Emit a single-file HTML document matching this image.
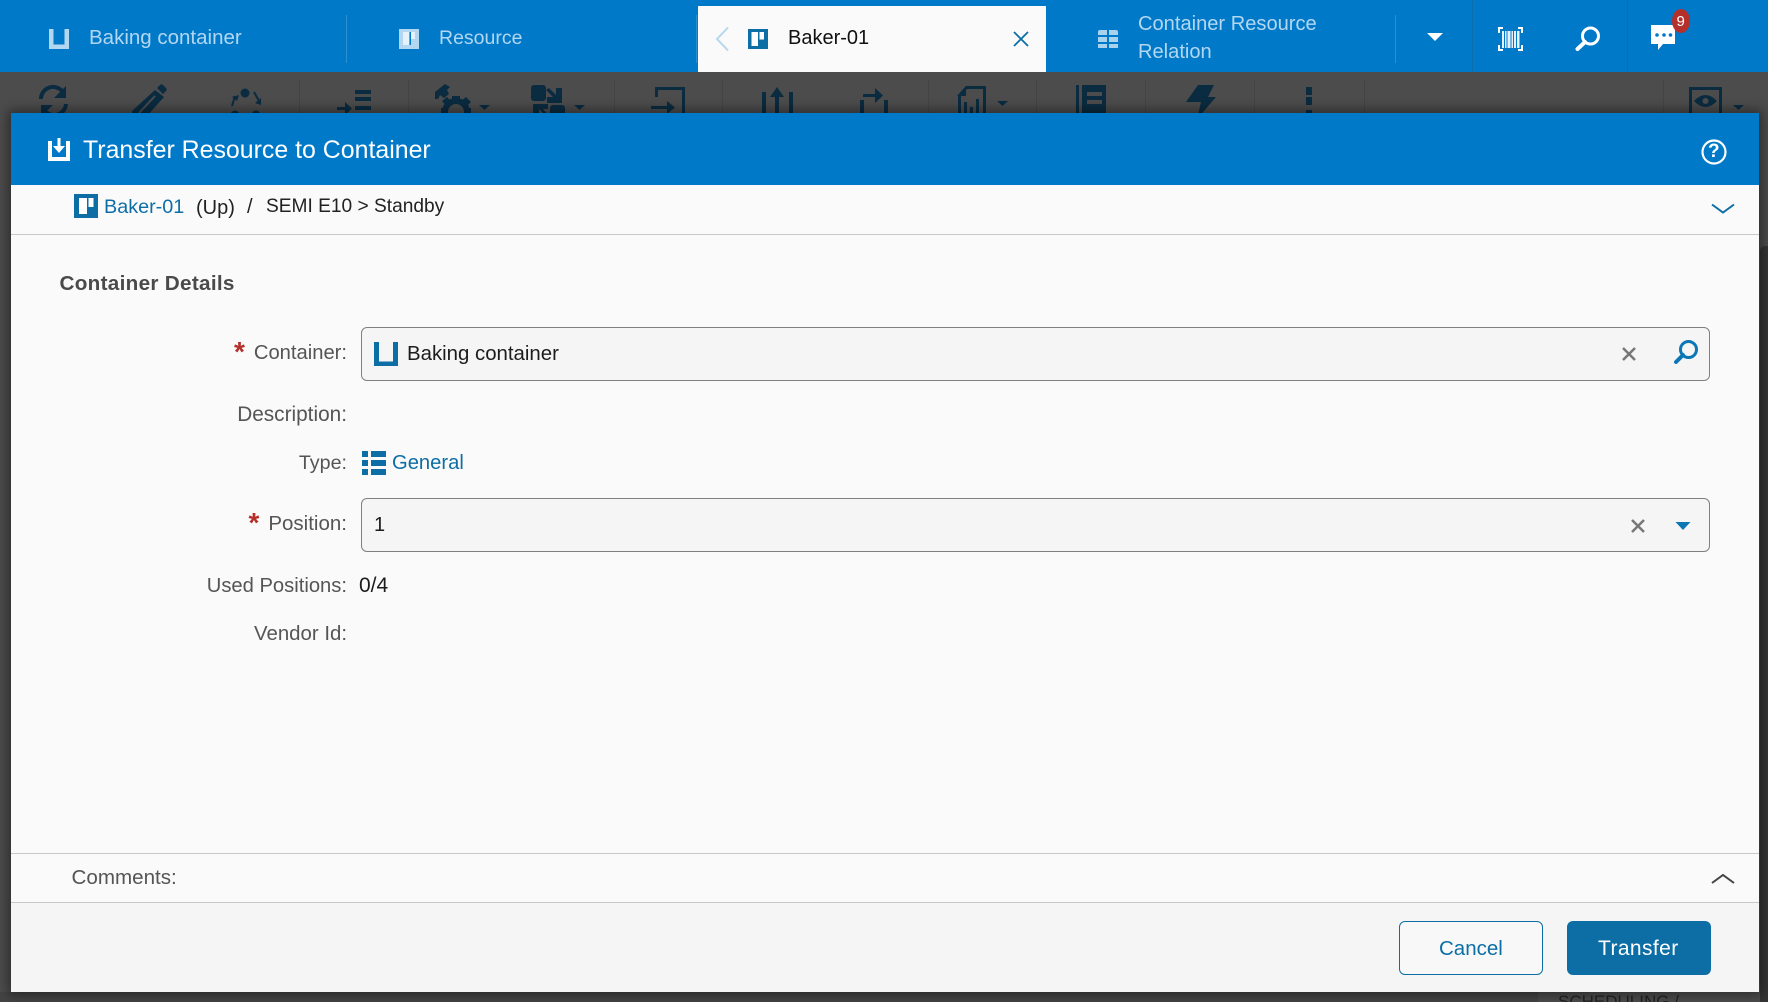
<!DOCTYPE html>
<html>
<head>
<meta charset="utf-8">
<style>
html,body{margin:0;padding:0;width:1768px;height:1002px;overflow:hidden;background:#4c4c4c;font-family:"Liberation Sans",sans-serif;}
#page{position:relative;width:1768px;height:1002px;overflow:hidden;}
.t{position:absolute;white-space:nowrap;line-height:28px;height:28px;font-size:20px;}
.l{color:#555;text-align:right;right:1421px;font-size:20.200px;}
.tab{color:#b3d7f0;}
svg{position:absolute;left:0;top:0;}
#dialog{position:absolute;left:11px;top:113px;width:1748px;height:879px;background:#fafafa;box-shadow:0 0 11px 3px rgba(0,0,0,.42);}
.box{position:absolute;box-sizing:border-box;}
</style>
</head>
<body>
<div id="page">
<div class="box" style="left:1760px;top:246px;width:8px;height:756px;background:#353535;border-top-left-radius:5px"></div>
<div class="box" style="left:0;top:992px;width:1538px;height:10px;background:#444"></div>
<div class="t" style="left:1558px;top:988px;font-size:17px;color:#222">SCHEDULING /</div>

<!-- toolbar -->
<svg width="1768" height="1002" viewBox="0 0 1768 1002">
<g stroke="#444" stroke-width="1"><path d="M299.500 79V113M408.500 79V113M614.500 79V113M722.500 79V113M928.500 79V113M1036.500 79V113M1145.500 79V113M1254.500 79V113M1364.500 79V113M1663.500 79V113"/></g>
<g fill="#0a2b40" stroke="none">
 <!-- refresh -->
 <path d="M41 99a12 12 0 0 1 21-8" fill="none" stroke="#0a2b40" stroke-width="4"/><path d="M66 86v12h-12z"/>
 <path d="M66 104a12 12 0 0 1-21 7" fill="none" stroke="#0a2b40" stroke-width="4"/><path d="M41 116v-11h12z"/>
 <!-- pencil -->
 <path d="M157 88l3-3a2 2 0 0 1 3 0l3 3a2 2 0 0 1 0 3l-3 3z"/>
 <path d="M155 90l9 7-18 20h-14v-6z"/>
 <path d="M139 113l16-17" stroke="#4c4c4c" stroke-width="2"/>
 <!-- circle arrows -->
 <circle cx="245" cy="93" r="4.500"/><circle cx="235" cy="115" r="4.500"/><circle cx="256" cy="115" r="4.500"/>
 <path d="M232 106l3-10M254 92l5 9" fill="none" stroke="#0a2b40" stroke-width="2"/>
 <path d="M232 97l7-2-2 6zM255 103l6-5 0 7z"/>
 <!-- indent -->
 <path d="M355 90h16v4h-16zM355 97h16v4h-16zM355 106h16v4h-16zM337 107h11v3h-11z"/><path d="M345 102l7 6.500-7 6.500z"/>
 <!-- gear -->
 <circle cx="456" cy="112" r="11" fill="none" stroke="#0a2b40" stroke-width="6"/>
 <path d="M452 96h8v5h-8zM442 101l5-4 4 4-5 5zM461 101l5-4 5 5-4 4zM441 108h6v7h-6zM466 108h5v7h-5z"/>
 <path d="M435 92l10-8 5 3-3 3 2 4-5 4-4-3-2 4h-3z"/>
 <path d="M479 105h11l-5.500 5z"/>
 <!-- split -->
 <rect x="531" y="85" width="15" height="16" rx="3"/><rect x="550" y="105" width="15" height="12" rx="3"/>
 <path d="M549 88l7 7v-7h6v15h-15v-6h6l-7-7z"/>
 <path d="M546 116l-7-7v7h-6v-12h15v5h-5l6 7z"/>
 <path d="M574 105h11l-5.500 5z"/>
 <!-- transfer in -->
 <path d="M655 87h30v30h-3V90h-24v7h-3zM651 106h17v3h-17z"/><path d="M667 101l8 6.500-8 6.500z"/>
 <!-- up -->
 <path d="M762 92h4v24h-4zM789 92h4v24h-4zM775 94h4v20h-4z"/><path d="M777 87l7 10h-14z"/>
 <!-- move -->
 <path d="M860 100h4v15h-4zM884 100h4v15h-4zM863 94h15v3h-15z"/><path d="M875 88l8 7.500-8 7.500z"/>
 <!-- doc -->
 <path d="M966 86h19a1 1 0 0 1 1 1v28h-3V89h-16l-6 7v19h-3V95z"/><path d="M966 86v10h-9z"/>
 <path d="M964 102h3v14h-3zM970 107h3v9h-3zM976 99h3v17h-3z"/>
 <path d="M997 101h11l-5.500 5z"/>
 <!-- notebook -->
 <path d="M1076 85h3v31h-3zM1082 85h24v31h-24z"/><path d="M1087 92h15v4h-15zM1087 100h15v4h-15z" fill="#4c4c4c"/>
 <!-- bolt -->
 <path d="M1198 85h16l-6 12h8l-19 22 4-17h-15z"/>
 <!-- dots -->
 <path d="M1306 87h6v8h-6zM1306 97h6v8h-6zM1306 110h6v8h-6z"/>
 <!-- eye -->
 <path d="M1689 87h33v30h-3V90h-27v27h-3z"/>
 <path d="M1694 101q11.500-12 23 0q-11.500 12-23 0z"/><circle cx="1705.500" cy="101" r="3" fill="#4c4c4c"/>
 <path d="M1733 105h11l-5.500 5z"/>
</g>
</svg>

<!-- top bar -->
<div class="box" style="left:0;top:0;width:1768px;height:72px;background:#0079c9"></div>
<div class="box" style="left:698px;top:6px;width:348px;height:66px;background:#fafafa"></div>
<svg width="1768" height="72" viewBox="0 0 1768 72">
 <g stroke="#2b8fd1" stroke-width="1"><path d="M346.500 15V63M696.500 15V63M1395.500 15V63"/></g>
 <g stroke="#0b6dae" stroke-width="1"><path d="M1472.500 0V72M1627.500 0V72"/></g>
 <path d="M49 29h4.500v15.500h11V29h4.500v20H49z" fill="#b3d7f0"/>
 <rect x="399" y="29" width="20" height="20" fill="#b3d7f0"/><path d="M403 32h6v13h-6zM411 32h4v7h-4z" fill="#e6f2fb"/><path d="M409.500 32h1.500v13h-1.500z" fill="#0079c9"/>
 <path d="M728 27.500L717 39l11 11.500" fill="none" stroke="#b9d9ee" stroke-width="2"/>
 <rect x="748" y="29" width="20" height="20" fill="#0d6ea6"/><path d="M751.500 32h6.500v14h-6.500zM759.500 32h4.500v7.500h-4.500z" fill="#fff"/>
 <path d="M1014 32l14 14M1028 32l-14 14" stroke="#0d6ea6" stroke-width="1.800" fill="none"/>
 <g fill="#a9d2ef"><path d="M1100 30h7v5h-9v-3a2 2 0 0 1 2-2zM1109 30h7a2 2 0 0 1 2 2v3h-9zM1098 37h9v5h-9zM1109 37h9v5h-9zM1098 44h9v4h-9zM1109 44h9v4h-9z"/></g>
 <path d="M1427 33h16l-8 8z" fill="#fff"/>
 <!-- barcode -->
 <g fill="none" stroke="#fff" stroke-width="2"><path d="M1503 28h-4v5M1518 28h4v5M1503 50h-4v-5M1518 50h4v-5"/></g>
 <path d="M1502 31h2v17h-2zM1505 31h1.500v17h-1.500zM1507.500 31h3v17h-3zM1511.500 31h1.500v17h-1.500zM1514 31h2v17h-2zM1517 31h2.500v17H1517z" fill="#e6f2fb"/>
 <!-- search -->
 <circle cx="1590.500" cy="36" r="8" fill="none" stroke="#fff" stroke-width="3"/>
 <path d="M1585 42l-7.500 7" stroke="#fff" stroke-width="4" stroke-linecap="round"/>
 <!-- chat -->
 <path d="M1651 25h24v19h-12l-5 6v-6h-7z" fill="#fff"/>
 <circle cx="1657" cy="35" r="1.800" fill="#0079c9"/><circle cx="1664" cy="35" r="1.800" fill="#0079c9"/><circle cx="1670.500" cy="35" r="1.800" fill="#0079c9"/>
 <ellipse cx="1681" cy="21" rx="9" ry="12" fill="#b5302a"/>
</svg>
<div class="t" style="left:1676.500px;top:8px;font-size:15px;color:#fff">9</div>
<div class="t tab" style="left:89px;top:24px;font-size:20.500px">Baking container</div>
<div class="t tab" style="left:439px;top:24px;font-size:19.500px">Resource</div>
<div class="t" style="left:788px;top:24px;font-size:20px;color:#111">Baker-01</div>
<div class="t tab" style="left:1138px;top:10px;font-size:20.100px">Container Resource</div>
<div class="t tab" style="left:1138px;top:38px;font-size:20.100px">Relation</div>

<!-- dialog -->
<div id="dialog"></div>
<div class="box" style="left:11px;top:113px;width:1748px;height:72px;background:#0079c9"></div>
<div class="box" style="left:11px;top:234px;width:1748px;height:1px;background:#c8c8c8"></div>
<div class="box" style="left:11px;top:853px;width:1748px;height:1px;background:#c8c8c8"></div>
<div class="box" style="left:11px;top:902px;width:1748px;height:90px;background:#f5f5f5;border-top:1px solid #c8c8c8"></div>

<div class="box" style="left:361px;top:327px;width:1349px;height:54px;background:#f5f5f5;border:1px solid #808080;border-radius:6px"></div>
<div class="box" style="left:361px;top:498px;width:1349px;height:54px;background:#f5f5f5;border:1px solid #808080;border-radius:6px"></div>
<div class="box" style="left:1399px;top:921px;width:144px;height:54px;background:#f8f8f8;border:1px solid #0d6ea6;border-radius:6px"></div>
<div class="box" style="left:1567px;top:921px;width:144px;height:54px;background:#0d6ea6;border-radius:6px"></div>

<svg width="1768" height="1002" viewBox="0 0 1768 1002">
 <!-- download -->
 <path d="M48 141h4v16h14v-16h4v20H48z" fill="#fff"/>
 <path d="M57.500 138h3v10h-3z" fill="#fff"/><path d="M53 146h12l-6 7z" fill="#fff"/>
 <!-- help -->
 <circle cx="1714" cy="152" r="11.500" fill="none" stroke="#fff" stroke-width="2.200"/>
 <!-- breadcrumb icon -->
 <rect x="74" y="194" width="24" height="24" fill="#0d6ea6"/><path d="M79 198h8v16h-8zM88.500 198h5v9h-5z" fill="#fff"/>
 <path d="M1712 204.500l11 8 11-8" fill="none" stroke="#0d6ea6" stroke-width="2"/>
 <path d="M1712 883l11-8 11 8" fill="none" stroke="#444" stroke-width="2"/>
 <!-- container U -->
 <path d="M374 342h5v19.500h14V342h5v24h-24z" fill="#0d6ea6"/>
 <!-- clear -->
 <path d="M1623 348l12 12M1635 348l-12 12" stroke="#777" stroke-width="2.500"/>
 <path d="M1632 520l12 12M1644 520l-12 12" stroke="#777" stroke-width="2.500"/>
 <!-- search -->
 <circle cx="1688.500" cy="349.500" r="8" fill="none" stroke="#0d76b5" stroke-width="3"/>
 <path d="M1683 355l-7 7" stroke="#0d76b5" stroke-width="4" stroke-linecap="round"/>
 <path d="M1675.500 522h15l-7.500 8z" fill="#0d76b5"/>
 <!-- type icon -->
 <path d="M362 451h6v6h-6zM371 451h15v6h-15zM362 460h6v6h-6zM371 460h15v6h-15zM362 469h6v6h-6zM371 469h15v6h-15z" fill="#0d6ea6"/>
</svg>

<div class="t" style="left:83px;top:136px;font-size:24.900px;color:#fff">Transfer Resource to Container</div>
<div class="t" style="left:1708px;top:138px;font-size:19px;font-weight:bold;color:#fff">?</div>
<div class="t" style="left:104px;top:193px;font-size:19.800px;color:#0d6ea6">Baker-01</div>
<div class="t" style="left:196px;top:194px;font-size:20px;color:#222">(Up)</div>
<div class="t" style="left:247px;top:193px;font-size:20px;color:#222">/</div>
<div class="t" style="left:266px;top:193px;font-size:19.150px;color:#222">SEMI E10 &gt; Standby</div>
<div class="t" style="left:59.500px;top:270px;font-size:20.700px;font-weight:bold;letter-spacing:.3px;color:#4a4a4a">Container Details</div>

<div class="t l" style="top:336px"><span style="color:#b5302a;font-size:28px;font-weight:bold;position:relative;top:2px;margin-right:9px">*</span>Container:</div>
<div class="t l" style="top:401px;font-size:20.800px">Description:</div>
<div class="t l" style="top:449px;font-size:19.700px">Type:</div>
<div class="t l" style="top:507px;font-size:20.500px"><span style="color:#b5302a;font-size:28px;font-weight:bold;position:relative;top:2px;margin-right:9px">*</span>Position:</div>
<div class="t l" style="top:572px">Used Positions:</div>
<div class="t l" style="top:620px;font-size:20.400px">Vendor Id:</div>

<div class="t" style="left:407px;top:340px;font-size:20.400px;color:#1c1c1c">Baking container</div>
<div class="t" style="left:392px;top:449px;font-size:20.200px;color:#0d6ea6">General</div>
<div class="t" style="left:374px;top:511px;font-size:20px;color:#1c1c1c">1</div>
<div class="t" style="left:359px;top:572px;font-size:21px;color:#1c1c1c">0/4</div>
<div class="t" style="left:71.500px;top:864px;font-size:20.600px;color:#555">Comments:</div>
<div class="t" style="left:1439px;top:935px;font-size:20.500px;color:#0d6ea6">Cancel</div>
<div class="t" style="left:1598px;top:935px;font-size:21px;letter-spacing:.4px;color:#fff">Transfer</div>
</div>
</body>
</html>
